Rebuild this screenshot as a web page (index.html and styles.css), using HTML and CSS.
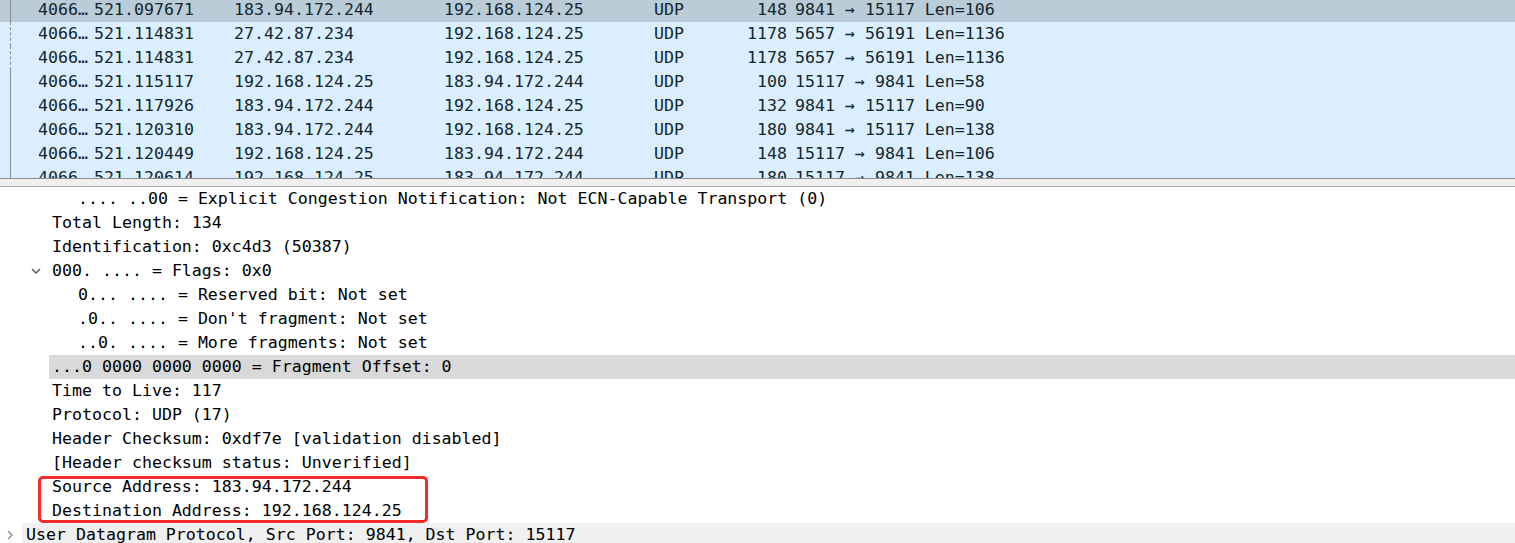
FILE: index.html
```html
<!DOCTYPE html>
<html>
<head>
<meta charset="utf-8">
<link rel="stylesheet" href="styles.css">
</head>
<body>
<div class="app">
  <div class="plist">
    <div class="prows">
      <div class="prow sel"><span class="rel"><i class="ln"></i></span><span class="c-no">4066…</span><span class="c-time">521.097671</span><span class="c-src">183.94.172.244</span><span class="c-dst">192.168.124.25</span><span class="c-proto">UDP</span><span class="c-len">148</span><span class="c-info">9841 → 15117 Len=106</span></div>
      <div class="prow"><span class="rel"><i class="ln dash"></i></span><span class="c-no">4066…</span><span class="c-time">521.114831</span><span class="c-src">27.42.87.234</span><span class="c-dst">192.168.124.25</span><span class="c-proto">UDP</span><span class="c-len">1178</span><span class="c-info">5657 → 56191 Len=1136</span></div>
      <div class="prow"><span class="rel"><i class="ln dash"></i></span><span class="c-no">4066…</span><span class="c-time">521.114831</span><span class="c-src">27.42.87.234</span><span class="c-dst">192.168.124.25</span><span class="c-proto">UDP</span><span class="c-len">1178</span><span class="c-info">5657 → 56191 Len=1136</span></div>
      <div class="prow"><span class="rel"><i class="ln"></i></span><span class="c-no">4066…</span><span class="c-time">521.115117</span><span class="c-src">192.168.124.25</span><span class="c-dst">183.94.172.244</span><span class="c-proto">UDP</span><span class="c-len">100</span><span class="c-info">15117 → 9841 Len=58</span></div>
      <div class="prow"><span class="rel"><i class="ln"></i></span><span class="c-no">4066…</span><span class="c-time">521.117926</span><span class="c-src">183.94.172.244</span><span class="c-dst">192.168.124.25</span><span class="c-proto">UDP</span><span class="c-len">132</span><span class="c-info">9841 → 15117 Len=90</span></div>
      <div class="prow"><span class="rel"><i class="ln"></i></span><span class="c-no">4066…</span><span class="c-time">521.120310</span><span class="c-src">183.94.172.244</span><span class="c-dst">192.168.124.25</span><span class="c-proto">UDP</span><span class="c-len">180</span><span class="c-info">9841 → 15117 Len=138</span></div>
      <div class="prow"><span class="rel"><i class="ln"></i></span><span class="c-no">4066…</span><span class="c-time">521.120449</span><span class="c-src">192.168.124.25</span><span class="c-dst">183.94.172.244</span><span class="c-proto">UDP</span><span class="c-len">148</span><span class="c-info">15117 → 9841 Len=106</span></div>
      <div class="prow"><span class="rel"><i class="ln"></i></span><span class="c-no">4066…</span><span class="c-time">521.120614</span><span class="c-src">192.168.124.25</span><span class="c-dst">183.94.172.244</span><span class="c-proto">UDP</span><span class="c-len">180</span><span class="c-info">15117 → 9841 Len=138</span></div>
    </div>
  </div>
  <div class="splitter"></div>
  <div class="tree">
    <div class="trow l2">.... ..00 = Explicit Congestion Notification: Not ECN-Capable Transport (0)</div>
    <div class="trow l1">Total Length: 134</div>
    <div class="trow l1">Identification: 0xc4d3 (50387)</div>
    <div class="trow l1 open"><svg class="chev down" width="12" height="12" viewBox="0 0 12 12"><path d="M2 4 L6 8 L10 4" fill="none" stroke="#555" stroke-width="1.4"/></svg>000. .... = Flags: 0x0</div>
    <div class="trow l2">0... .... = Reserved bit: Not set</div>
    <div class="trow l2">.0.. .... = Don't fragment: Not set</div>
    <div class="trow l2">..0. .... = More fragments: Not set</div>
    <div class="trow l1 hl">...0 0000 0000 0000 = Fragment Offset: 0</div>
    <div class="trow l1">Time to Live: 117</div>
    <div class="trow l1">Protocol: UDP (17)</div>
    <div class="trow l1">Header Checksum: 0xdf7e [validation disabled]</div>
    <div class="trow l1">[Header checksum status: Unverified]</div>
    <div class="mark">
      <div class="trow l1">Source Address: 183.94.172.244</div>
      <div class="trow l1">Destination Address: 192.168.124.25</div>
    </div>
    <div class="trow l0 proto"><svg class="chev right" width="12" height="12" viewBox="0 0 12 12"><path d="M4 2 L8 6 L4 10" fill="none" stroke="#888" stroke-width="1.3"/></svg>User Datagram Protocol, Src Port: 9841, Dst Port: 15117</div>
  </div>
</div>
</body>
</html>
```
FILE: styles.css
```css
html, body {
  margin: 0;
  padding: 0;
  background: #ffffff;
  overflow: hidden;
}
.app {
  width: 1515px;
  height: 543px;
  font-family: "DejaVu Sans Mono", "Liberation Mono", monospace;
  font-size: 16.6px;
  display: flex;
  flex-direction: column;
}
.plist {
  height: 178px;
  overflow: hidden;
  background: #daeeff;
  flex: none;
}
.prows {
  margin-top: -2px;
}
.prow {
  display: flex;
  height: 24px;
  line-height: 24px;
  color: #12272e;
  white-space: nowrap;
}
.prow.sel {
  background: #bbccd9;
}
.rel {
  width: 38px;
  flex: none;
  display: flex;
}
.ln {
  margin-left: 10px;
  width: 0;
  height: 24px;
  border-left: 1px solid #8c8c8c;
}
.ln.dash {
  border-left: 1px dashed #8c8c8c;
}
.c-no { width: 56px; flex: none; }
.c-time { width: 140px; flex: none; }
.c-src { width: 210px; flex: none; }
.c-dst { width: 210px; flex: none; }
.c-proto { width: 46px; flex: none; }
.c-len { width: 87px; flex: none; text-align: right; }
.c-info { padding-left: 8px; }
.splitter {
  height: 7px;
  flex: none;
  background: #f0f0f0;
  border-top: 1px solid #8a8f96;
  border-bottom: 1px solid #a8a8a8;
}
.tree {
  display: flex;
  flex-direction: column;
  color: #000;
}
.trow {
  height: 24px;
  line-height: 24px;
  white-space: nowrap;
  display: flex;
  align-items: center;
  position: relative;
}
.l0 { padding-left: 26px; }
.l1 { padding-left: 52px; }
.l2 { padding-left: 78px; }
.chev {
  position: absolute;
  top: 6px;
}
.chev.down { left: 30px; }
.chev.right { left: 4px; }
.hl {
  margin-left: 49px;
  padding-left: 3px;
  background: #d9d9d9;
}
.proto {
  margin-left: 22px;
  padding-left: 4px;
  background: #f0f0f0;
}
.proto .chev.right { left: -18px; }
.mark {
  position: relative;
}
.mark::after {
  content: "";
  position: absolute;
  left: 38px;
  top: 1px;
  width: 390px;
  height: 47px;
  box-sizing: border-box;
  border: 3px solid #f52a2a;
  border-radius: 5px;
}
```
